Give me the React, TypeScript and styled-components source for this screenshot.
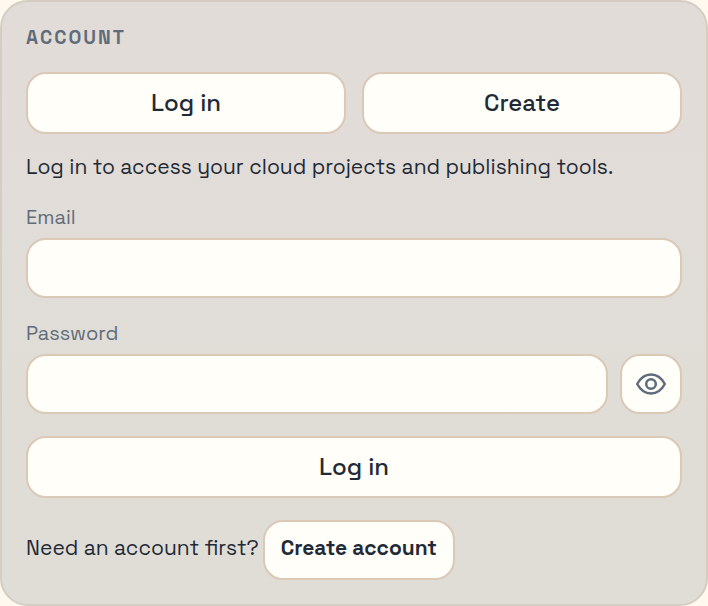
import React, { useState } from "react";
import styled, { createGlobalStyle } from "styled-components";

const GlobalStyle = createGlobalStyle`
  *, *::before, *::after { box-sizing: border-box; }
  body {
    margin: 0;
    background: #fef8ef;
    color: #1f2a37;
    font-family: "Space Grotesk", Inter, sans-serif;
    font-size: 21px;
    line-height: 26px;
  }
  button, input { font: inherit; color: inherit; }
`;

const Card = styled.main`
  display: flex;
  flex-direction: column;
  gap: 22px;
  padding: 24px;
  border: 2px solid #d5cdc1;
  border-radius: 28px;
  background: linear-gradient(180deg, #e2dcd8, #dfddd6);
  background-origin: border-box;
`;

const Title = styled.h2`
  margin: 0;
  color: #5f6c7b;
  font-size: 19px;
  font-weight: 700;
  line-height: 24px;
  letter-spacing: 2px;
  text-transform: uppercase;
`;

const Tabs = styled.div`
  display: grid;
  grid-template-columns: 1fr 1fr;
  gap: 16px;
`;

const Button = styled.button<{ $small?: boolean }>`
  height: ${(p) => (p.$small ? 60 : 62)}px;
  padding: ${(p) => (p.$small ? "0 16px 4px" : "0 16px")};
  border: 2px solid #d9c9b6;
  border-radius: 20px;
  background: #fffef8;
  font-size: ${(p) => (p.$small ? 21 : 24)}px;
  font-weight: ${(p) => (p.$small ? 600 : 500)};
  cursor: pointer;
`;

const Text = styled.p`
  margin: 0;
  padding-bottom: 4px;
  line-height: 22px;
`;

const Form = styled.form`
  display: flex;
  flex-direction: column;
  gap: 22px;
`;

const Field = styled.div`
  display: flex;
  flex-direction: column;
  gap: 8px;
`;

const Label = styled.label`
  color: #5f6c7b;
  font-size: 20px;
`;

const InputRow = styled.div`
  display: flex;
  gap: 12px;
`;

const Input = styled.input`
  flex: 1;
  min-width: 0;
  height: 60px;
  padding: 0 20px;
  border: 2px solid #d9c9b6;
  border-radius: 20px;
  background: #fffef8;
`;

const IconButton = styled(Button)`
  display: flex;
  align-items: center;
  justify-content: center;
  width: 62px;
  padding: 0;
  color: #5f6c7b;
`;

const Footer = styled.div`
  display: flex;
  flex-wrap: wrap;
  align-items: center;
  gap: 4px;
`;

function EyeIcon() {
  return (
    <svg width="32" height="32" viewBox="0 0 32 32" fill="none" stroke="currentColor" strokeWidth="2.5" strokeLinejoin="round" aria-hidden="true">
      <path d="M2.2 16C5.6 9.7 10.4 6.5 16 6.5S26.4 9.7 29.8 16C26.4 22.3 21.6 25.5 16 25.5S5.6 22.3 2.2 16Z" />
      <circle cx="16" cy="16" r="4.8" />
    </svg>
  );
}

export default function App() {
  const [visible, setVisible] = useState(false);
  return (
    <>
      <GlobalStyle />
      <Card>
        <Title>Account</Title>
        <Tabs>
          <Button type="button">Log in</Button>
          <Button type="button">Create</Button>
        </Tabs>
        <Text>Log in to access your cloud projects and publishing tools.</Text>
        <Form onSubmit={(e) => e.preventDefault()}>
          <Field>
            <Label htmlFor="email">Email</Label>
            <InputRow>
              <Input id="email" type="email" />
            </InputRow>
          </Field>
          <Field>
            <Label htmlFor="password">Password</Label>
            <InputRow>
              <Input id="password" type={visible ? "text" : "password"} />
              <IconButton
                $small
                type="button"
                aria-label={visible ? "Hide password" : "Show password"}
                onClick={() => setVisible(!visible)}
              >
                <EyeIcon />
              </IconButton>
            </InputRow>
          </Field>
          <Button type="submit">Log in</Button>
        </Form>
        <Footer>
          <Text>Need an account first?</Text>
          <Button $small type="button">Create account</Button>
        </Footer>
      </Card>
    </>
  );
}
